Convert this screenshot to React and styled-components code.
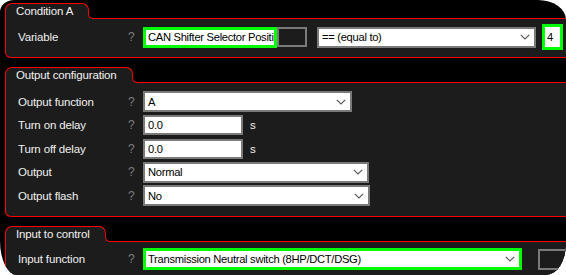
import styled, { createGlobalStyle } from "styled-components";

const GlobalStyle = createGlobalStyle`
  body {
    margin: 0;
    background: #fff;
  }
`;

const Frame = styled.div`
  box-sizing: border-box;
  width: 566px;
  height: 275px;
  overflow: hidden;
  background: #000;
  border-radius: 14px 28px 20px 17px / 12px 20px 32px 34px;
  padding: 3px 0 0 5px;
  display: flex;
  flex-direction: column;
  gap: 9px;
  font-family: "Liberation Sans", Arial, sans-serif;
  font-size: 11px;
  letter-spacing: -0.15px;
`;

const Panel = styled.section`
  width: 640px;
  flex-shrink: 0;
`;

const Header = styled.div`
  display: flex;
  height: 16px;
`;

const Tab = styled.div`
  position: relative;
  z-index: 0;
  box-sizing: border-box;
  height: 16px;
  padding: 0 15px 0 10px;
  border: 1px solid #ff0000;
  border-bottom: none;
  border-radius: 7px 7px 0 0;
  background: #1c1c1c;
  color: #f2f2f2;
  line-height: 15px;
  font-size: 11.5px;

  /* flared base of the tab */
  &::after {
    content: "";
    position: absolute;
    right: -6px;
    bottom: 0;
    width: 6px;
    height: 6px;
    background: #1c1c1c;
    z-index: 1;
  }

  /* concave corner into the header line */
  &::before {
    content: "";
    position: absolute;
    right: -6px;
    bottom: 0;
    box-sizing: border-box;
    width: 6px;
    height: 6px;
    background: #000;
    border-left: 1px solid #ff0000;
    border-bottom: 1px solid #ff0000;
    border-bottom-left-radius: 5px;
    z-index: 2;
  }
`;

const Line = styled.div`
  flex: 1;
  align-self: flex-end;
  height: 1px;
  background: #ff0000;
`;

const Body = styled.div`
  box-sizing: border-box;
  background: #1c1c1c;
  border: 1px solid #ff0000;
  border-top: none;
  border-radius: 0 0 6px 6px;
  padding: ${(p) => p.$pad};
  display: flex;
  flex-direction: column;
`;

const Row = styled.div`
  display: flex;
  align-items: center;
  height: ${(p) => p.$h || 23.5}px;
`;

const Label = styled.div`
  width: 110px;
  padding-left: 1px;
  color: #f0f0f0;
  font-size: 11.5px;
  white-space: nowrap;
`;

const Help = styled.div`
  width: 15px;
  color: #7c7c7c;
  font-size: 12px;
`;

const Field = styled.div`
  box-sizing: border-box;
  flex-shrink: 0;
  width: ${(p) => p.$w}px;
  height: ${(p) => p.$h || 21}px;
  margin-left: ${(p) => p.$ml || 0}px;
  background: ${(p) => (p.$dark ? "#1c1c1c" : "#fff")};
  border: ${(p) => (p.$hl ? "3px solid #00ff00" : "2px solid #7a7a7a")};
  color: #000;
  padding: 0 4px 0 ${(p) => (p.$hl ? 2 : 3)}px;
  display: flex;
  align-items: center;
  justify-content: space-between;
  white-space: nowrap;
  overflow: hidden;
  font-size: 11.2px;
  letter-spacing: -0.3px;
`;

const Unit = styled.span`
  margin-left: 7px;
  color: #f0f0f0;
  font-size: 11.5px;
`;

function Chevron() {
  return (
    <svg width="10" height="6" viewBox="0 0 10 6">
      <polyline
        points="0.8,0.8 5,5 9.2,0.8"
        fill="none"
        stroke="#5a5a5a"
        strokeWidth="1.2"
      />
    </svg>
  );
}

function Select({ value, ...rest }) {
  return (
    <Field {...rest}>
      <span>{value}</span>
      <Chevron />
    </Field>
  );
}

function Section({ title, pad, children }) {
  return (
    <Panel>
      <Header>
        <Tab>{title}</Tab>
        <Line />
      </Header>
      <Body $pad={pad}>{children}</Body>
    </Panel>
  );
}

export default function App() {
  return (
    <>
      <GlobalStyle />
      <Frame>
        <Section title="Condition A" pad="5px 0 7px 11px">
          <Row $h={26}>
            <Label>Variable</Label>
            <Help>?</Help>
            <Field $w={134} $hl>
              CAN Shifter Selector Positi
            </Field>
            <Field $w={30} $h={20} $dark />
            <Select $w={219} $ml={10} value="== (equal to)" />
            <Field $w={21} $h={26} $ml={6} $hl>
              4
            </Field>
          </Row>
        </Section>

        <Section title="Output configuration" pad="7px 0 8.5px 11px">
          <Row>
            <Label>Output function</Label>
            <Help>?</Help>
            <Select $w={209} value="A" />
          </Row>
          <Row>
            <Label>Turn on delay</Label>
            <Help>?</Help>
            <Field $w={100} $h={20}>
              0.0
            </Field>
            <Unit>s</Unit>
          </Row>
          <Row>
            <Label>Turn off delay</Label>
            <Help>?</Help>
            <Field $w={100} $h={20}>
              0.0
            </Field>
            <Unit>s</Unit>
          </Row>
          <Row>
            <Label>Output</Label>
            <Help>?</Help>
            <Select $w={226} value="Normal" />
          </Row>
          <Row>
            <Label>Output flash</Label>
            <Help>?</Help>
            <Select $w={227} value="No" />
          </Row>
        </Section>

        <Section title="Input to control" pad="5px 0 8px 11px">
          <Row $h={24}>
            <Label>Input function</Label>
            <Help>?</Help>
            <Select
              $w={379}
              $h={22}
              $hl
              value="Transmission Neutral switch (8HP/DCT/DSG)"
            />
            <Field $w={40} $h={21} $ml={16} $dark />
          </Row>
        </Section>
      </Frame>
    </>
  );
}
